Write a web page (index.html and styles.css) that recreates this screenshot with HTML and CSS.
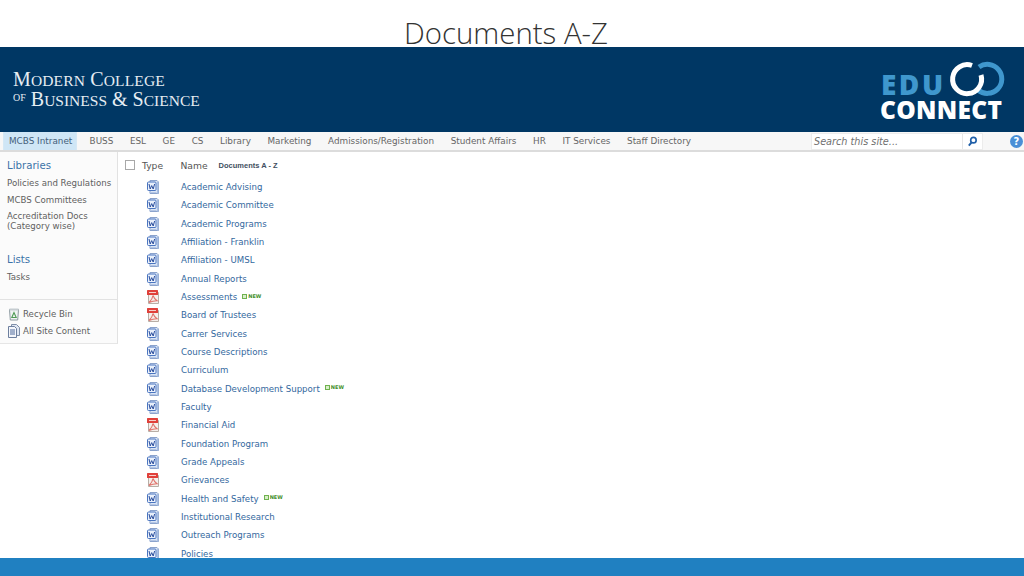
FILE: index.html
```html
<!DOCTYPE html>
<html lang="en">
<head>
<meta charset="utf-8">
<title>Documents A-Z</title>
<link rel="stylesheet" href="styles.css">
</head>
<body>
<svg class="defs" width="0" height="0">
  <symbol id="word" viewBox="0 0 16 16">
    <path d="M5 1.500h7l1.500 1.500v11.500H5z" fill="#dbe6f6" stroke="#8ba3cc"/>
    <path d="M12 3h1.500v11.500H12z" fill="#a9bfe2"/>
    <rect x="2.500" y="3" width="8.500" height="8.500" rx="1" fill="#e9f0fb" stroke="#4a75c0"/>
    <path d="M4 5l1.200 5 1.500-3.400L8.200 10 9.600 5" fill="none" stroke="#2b4f9e" stroke-width="1"/>
    <path d="M4.500 13.500h7" stroke="#b5c6e4"/>
  </symbol>
  <symbol id="pdf" viewBox="0 0 16 16">
    <path d="M3.500 1.500h8l2 2v11h-10z" fill="#f4f0ec" stroke="#b8aea6"/>
    <rect x="2" y="1" width="11" height="5" rx=".5" fill="#e0403a"/>
    <path d="M4 3.500h7" stroke="#f7cfca"/>
    <path d="M8 6.500c-.4 2.600-1.800 5-4 7 2.500-1.200 5-1.800 8-1.800-1.800-1.200-3.200-3-4-5.200z" fill="none" stroke="#e0726b" stroke-width="1.100"/>
  </symbol>
</svg>
<div class="page">
  <h1 class="title">Documents A-Z</h1>
  <header class="banner">
    <div class="college">
      <div class="college-line line-one">M<small>ODERN</small> C<small>OLLEGE</small></div>
      <div class="college-line"><sup class="of">OF</sup>B<small>USINESS</small> &amp; S<small>CIENCE</small></div>
    </div>
    <div class="edu">
      <svg class="rings" viewBox="0 0 62 42" width="62" height="42">
        <path d="M34 9A14.500 14.500 0 1 1 33 32" fill="none" stroke="#3f97cd" stroke-width="5"/>
        <path d="M27 7.500A14.500 14.500 0 1 0 36 17" fill="none" stroke="#fff" stroke-width="5"/>
      </svg>
      <div class="edu-word">EDU</div>
      <div class="connect-word">CONNECT</div>
    </div>
  </header>
  <nav class="topnav">
    <a class="tab tab-active">MCBS Intranet</a>
    <a class="tab">BUSS</a>
    <a class="tab">ESL</a>
    <a class="tab">GE</a>
    <a class="tab">CS</a>
    <a class="tab">Library</a>
    <a class="tab">Marketing</a>
    <a class="tab">Admissions/Registration</a>
    <a class="tab">Student Affairs</a>
    <a class="tab">HR</a>
    <a class="tab">IT Services</a>
    <a class="tab">Staff Directory</a>
    <div class="search">
      <span class="search-text">Search this site...</span>
      <span class="search-btn">
        <svg viewBox="0 0 12 12" width="11" height="11"><circle cx="7" cy="4.500" r="3" fill="none" stroke="#1f5fa8" stroke-width="1.800"/><path d="M5 7L2 10.500" stroke="#1f5fa8" stroke-width="2.200"/></svg>
      </span>
    </div>
    <span class="help">?</span>
  </nav>
  <div class="main">
    <aside class="side">
      <div class="side-top">
        <div class="side-head">Libraries</div>
        <div class="side-item">Policies and Regulations</div>
        <div class="side-item">MCBS Committees</div>
        <div class="side-item side-wrap">Accreditation Docs<br>(Category wise)</div>
        <div class="side-head side-lists">Lists</div>
        <div class="side-item">Tasks</div>
      </div>
      <div class="side-bottom">
        <div class="side-link">
          <svg viewBox="0 0 12 14" width="12" height="14"><path d="M1.500 2.500h9l-.8 10.500H2.300z" fill="#f1f4f4" stroke="#8d9aa0"/><path d="M1.500 2.500h9" stroke="#c5ccd0" stroke-width="2"/><path d="M6 5.500L3.800 10.500h4.400z" fill="none" stroke="#4f9a55" stroke-width="1.100"/></svg>
          <span>Recycle Bin</span>
        </div>
        <div class="side-link">
          <svg viewBox="0 0 12 14" width="12" height="14"><path d="M3.500 .5h5l3 3v8h-8z" fill="#dfe6f2" stroke="#7f8ea8"/><path d="M.5 2.500h6l2 2v9h-8z" fill="#f4f6fb" stroke="#6d7f9e"/><path d="M2 6h5M2 8h5M2 10h5" stroke="#4e6a9c"/></svg>
          <span>All Site Content</span>
        </div>
      </div>
    </aside>
    <section class="list">
      <div class="list-head">
        <span class="check"></span>
        <span class="col-type">Type</span>
        <span class="col-name">Name</span>
        <span class="col-title">Documents A - Z</span>
      </div>
      <div class="row"><svg class="ico"><use href="#word"/></svg><a class="doc">Academic Advising</a></div>
      <div class="row"><svg class="ico"><use href="#word"/></svg><a class="doc">Academic Committee</a></div>
      <div class="row"><svg class="ico"><use href="#word"/></svg><a class="doc">Academic Programs</a></div>
      <div class="row"><svg class="ico"><use href="#word"/></svg><a class="doc">Affiliation - Franklin</a></div>
      <div class="row"><svg class="ico"><use href="#word"/></svg><a class="doc">Affiliation - UMSL</a></div>
      <div class="row"><svg class="ico"><use href="#word"/></svg><a class="doc">Annual Reports</a></div>
      <div class="row"><svg class="ico"><use href="#pdf"/></svg><a class="doc">Assessments</a><span class="new"><i class="new-box"></i>NEW</span></div>
      <div class="row"><svg class="ico"><use href="#pdf"/></svg><a class="doc">Board of Trustees</a></div>
      <div class="row"><svg class="ico"><use href="#word"/></svg><a class="doc">Carrer Services</a></div>
      <div class="row"><svg class="ico"><use href="#word"/></svg><a class="doc">Course Descriptions</a></div>
      <div class="row"><svg class="ico"><use href="#word"/></svg><a class="doc">Curriculum</a></div>
      <div class="row"><svg class="ico"><use href="#word"/></svg><a class="doc">Database Development Support</a><span class="new"><i class="new-box"></i>NEW</span></div>
      <div class="row"><svg class="ico"><use href="#word"/></svg><a class="doc">Faculty</a></div>
      <div class="row"><svg class="ico"><use href="#pdf"/></svg><a class="doc">Financial Aid</a></div>
      <div class="row"><svg class="ico"><use href="#word"/></svg><a class="doc">Foundation Program</a></div>
      <div class="row"><svg class="ico"><use href="#word"/></svg><a class="doc">Grade Appeals</a></div>
      <div class="row"><svg class="ico"><use href="#pdf"/></svg><a class="doc">Grievances</a></div>
      <div class="row"><svg class="ico"><use href="#word"/></svg><a class="doc">Health and Safety</a><span class="new"><i class="new-box"></i>NEW</span></div>
      <div class="row"><svg class="ico"><use href="#word"/></svg><a class="doc">Institutional Research</a></div>
      <div class="row"><svg class="ico"><use href="#word"/></svg><a class="doc">Outreach Programs</a></div>
      <div class="row"><svg class="ico"><use href="#word"/></svg><a class="doc">Policies</a></div>
    </section>
  </div>
  <footer class="footer"></footer>
</div>
</body>
</html>
```
FILE: styles.css
```css
* { box-sizing: border-box; }
html, body { margin: 0; height: 100%; overflow: hidden; background: #fff; }
body { font-family: "DejaVu Sans", Verdana, sans-serif; font-size: 8.650px; color: #5f5f5f; }
.defs { position: absolute; }
.page { width: 1024px; height: 576px; display: flex; flex-direction: column; overflow: hidden; }
.title { margin: 0; height: 47px; flex: none; text-align: center; padding: 13px 12px 0 0; font: 300 29.400px/40px "Open Sans", sans-serif; color: #333; }
.banner { flex: none; height: 85px; background: #003764; display: flex; justify-content: space-between; align-items: flex-start; }
.college { margin: 22px 0 0 13px; font-family: "Liberation Serif", serif; color: #e6edf3; font-size: 20px; line-height: 20px; }
.college-line { white-space: nowrap; height: 20px; }
.line-one { letter-spacing: .15px; }
.college-line small { font-size: 15.500px; }
.of { font-size: 10px; vertical-align: 5px; line-height: 0; margin-right: 5px; }
.edu { position: relative; width: 124px; height: 72px; margin: 9px 20px 0 0; font-family: "Open Sans", sans-serif; font-weight: 800; }
.rings { position: absolute; left: 65px; top: 2px; }
.edu-word { position: absolute; left: 1px; top: 17px; font-size: 28px; line-height: 22px; color: #3f97cd; letter-spacing: 2.500px; }
.connect-word { position: absolute; left: 0; top: 44px; font-size: 24.500px; line-height: 19px; color: #fff; letter-spacing: .3px; }
.topnav { flex: none; height: 20px; background: #f7f7f7; border-bottom: 2px solid #dcdcdc; display: flex; align-items: stretch; padding-left: 3px; color: #666; font-size: 8.840px; }
.tab { padding: 0 8.300px; line-height: 19px; white-space: nowrap; }
.tab-active { padding: 0 4px 0 5px; margin-right: 4px; background: #cfe6f6; color: #44607a; border: 1px solid #d5e8f5; border-width: 0 1px; }
.search { margin-left: auto; margin-right: 27px; width: 172px; height: 17px; margin-top: 1px; background: #fff; border: 1px solid #ececec; display: flex; justify-content: space-between; }
.search-text { font-style: italic; color: #6f6f6f; font-size: 9.700px; line-height: 15px; padding-left: 2px; }
.search-btn { width: 20px; border-left: 1px solid #e6e6e6; display: flex; align-items: center; justify-content: center; }
.help { width: 13px; height: 13px; margin: 3px 1px 0 0; border-radius: 50%; background: #4a8fd6; color: #fff; font: 700 10px/13px "DejaVu Sans", sans-serif; text-align: center; }
.main { flex: 1; min-height: 0; display: flex; overflow: hidden; }
.side { flex: none; width: 118px; height: 192px; border-right: 1px solid #e2e2e2; border-bottom: 1px solid #e6e6e6; background: #fbfbfb; display: flex; flex-direction: column; }
.side-top { height: 148px; padding: 7px 0 0 7px; border-bottom: 1px solid #e2e2e2; }
.side-head { font-size: 10.200px; line-height: 13px; color: #3b73a8; margin-bottom: 5px; }
.side-item { line-height: 12px; height: 12px; margin-bottom: 5px; white-space: nowrap; }
.side-wrap { height: 20px; line-height: 10px; margin-top: 0; }
.side-lists { margin-top: 22px; }
.side-bottom { padding: 5.500px 0 0 8px; }
.side-link { display: flex; align-items: center; gap: 3px; height: 17px; }
.list { flex: 1; padding: 6px 0 0 125px; margin-left: -118px; min-width: 0; }
.list-head { display: flex; align-items: center; height: 14px; margin-bottom: 6px; color: #555; font-size: 9.200px; }
.check { width: 10px; height: 10px; border: 1px solid #a8a8a8; background: #fff; margin-right: 7px; }
.col-type { width: 38.500px; }
.col-name { margin-right: 11px; }
.col-title { font: 700 7.500px/14px "Liberation Sans", Arial, sans-serif; color: #3f4f60; position: relative; top: 1px; }
.row { height: 18.330px; display: flex; align-items: center; padding-left: 20px; }
.ico { width: 16px; height: 16px; flex: none; margin-right: 20px; }
.doc { color: #33689e; white-space: nowrap; }
.new { display: inline-flex; align-items: center; gap: 1px; margin-left: 5px; color: #3f8f2b; font: 700 5px/7px "DejaVu Sans", sans-serif; position: relative; top: -1px; }
.new-box { width: 5px; height: 5px; border: 1px solid #6fb24e; background: #d9eecb; }
.footer { flex: none; height: 18px; background: #2080c1; }
```
